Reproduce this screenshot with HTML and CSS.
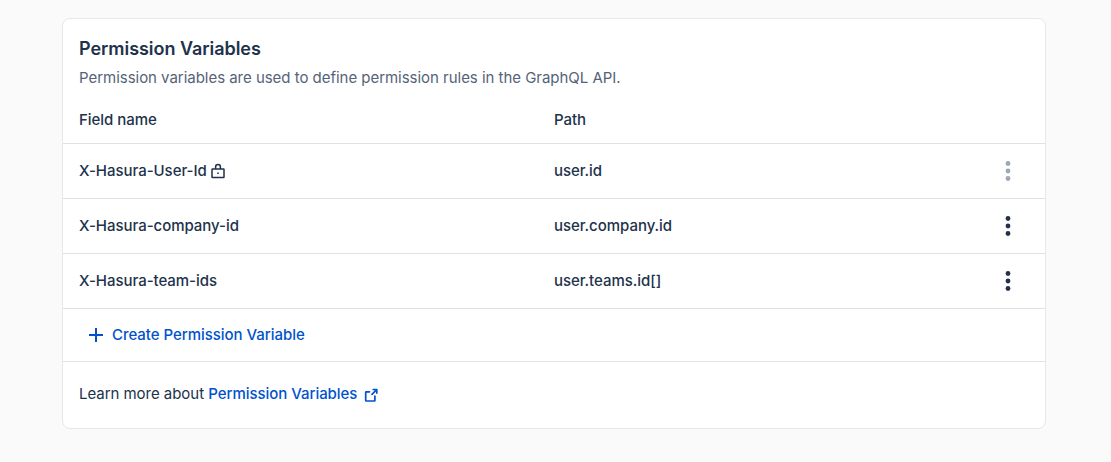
FILE: index.html
```html
<!DOCTYPE html>
<html lang="en">
<head>
<meta charset="utf-8">
<title>Permission Variables</title>
<link rel="stylesheet" href="styles.css">
</head>
<body>
<section class="card">
  <header class="card-header">
    <h1 class="title">Permission Variables</h1>
    <p class="subtitle">Permission variables are used to define permission rules in the GraphQL API.</p>
  </header>
  <div class="row row-head"><span>Field name</span><span>Path</span></div>
  <div class="row">
    <span class="name">X-Hasura-User-Id
      <svg class="lock" viewBox="0 0 16 16" fill="none" stroke="currentColor" stroke-width="1.5" stroke-linejoin="round"><rect x="2" y="6" width="12" height="8.5" rx=".5"/><path d="M5.6 6V3.9a2.4 2.4 0 0 1 4.8 0V6"/><circle cx="8" cy="10.2" r=".85" fill="currentColor" stroke="none"/></svg>
    </span>
    <span>user.id</span>
    <button class="menu menu-disabled" disabled aria-label="More options"><svg viewBox="0 0 24 24"><circle cx="12" cy="4.5" r="2.4"/><circle cx="12" cy="12" r="2.4"/><circle cx="12" cy="19.5" r="2.4"/></svg></button>
  </div>
  <div class="row">
    <span>X-Hasura-company-id</span>
    <span>user.company.id</span>
    <button class="menu" aria-label="More options"><svg viewBox="0 0 24 24"><circle cx="12" cy="4.5" r="2.4"/><circle cx="12" cy="12" r="2.4"/><circle cx="12" cy="19.5" r="2.4"/></svg></button>
  </div>
  <div class="row">
    <span>X-Hasura-team-ids</span>
    <span>user.teams.id[]</span>
    <button class="menu" aria-label="More options"><svg viewBox="0 0 24 24"><circle cx="12" cy="4.5" r="2.4"/><circle cx="12" cy="12" r="2.4"/><circle cx="12" cy="19.5" r="2.4"/></svg></button>
  </div>
  <div class="create-row">
    <button class="create"><svg class="plus" viewBox="0 0 16 16" fill="none" stroke="currentColor" stroke-width="2"><path d="M8 1v14M1 8h14"/></svg>Create Permission Variable</button>
  </div>
  <footer class="footer">Learn more about&nbsp;<a class="link" href="#">Permission Variables<svg class="external" viewBox="0 0 16 16" fill="none" stroke="currentColor" stroke-width="1.7" stroke-linecap="round" stroke-linejoin="round"><path d="M10.2 2.5h3.6v3.6M9 7.3l4.6-4.6M11.9 9.2v4.3a.5.5 0 0 1-.5.5h-8.2a.5.5 0 0 1-.5-.5v-8.2a.5.5 0 0 1 .5-.5H6.5"/></svg></a></footer>
</section>
</body>
</html>
```
FILE: styles.css
```css
* { box-sizing: border-box; }
body {
  margin: 0;
  padding: 18px 65px 0 62px;
  background: #fafafa;
  color: #21324b;
  font: 500 15px/22px Inter, sans-serif;
  letter-spacing: -.04px;
}
.card {
  height: 411px;
  background: #fff;
  border: 1px solid #e5e7eb;
  border-radius: 8px;
}
.card-header { height: 77px; padding: 18px 16px 0; }
.title { margin: 0; font-size: 18px; line-height: 24px; font-weight: 600; }
.subtitle { margin: 6px 0 0; color: #556378; font-weight: 400; letter-spacing: -.03px; }
.row {
  display: grid;
  grid-template-columns: 475px 1fr 40px;
  align-items: center;
  height: 55px;
  padding: 0 17px 0 16px;
  border-bottom: 1px solid #e0e1e3;
}
.row-head { height: 48px; }
.name { display: flex; align-items: center; gap: 3px; }
.lock { width: 16px; height: 16px; }
button { border: 0; padding: 0; background: none; color: inherit; font: inherit; letter-spacing: inherit; }
.menu { display: flex; justify-content: center; }
.menu svg { width: 24px; height: 24px; fill: currentColor; }
.menu-disabled { color: #9ca7b7; }
.create-row { height: 53px; padding: 15px 25px; border-bottom: 1px solid #e0e3e8; }
.create { display: flex; align-items: center; gap: 8px; color: #0052cd; }
.plus { width: 16px; height: 16px; }
.footer { display: flex; align-items: center; height: 64px; padding: 0 16px; font-weight: 400; }
.link { display: flex; align-items: center; gap: 6px; color: #0052cd; font-weight: 500; text-decoration: none; }
.external { width: 16px; height: 16px; margin-top: 2px; }
```
